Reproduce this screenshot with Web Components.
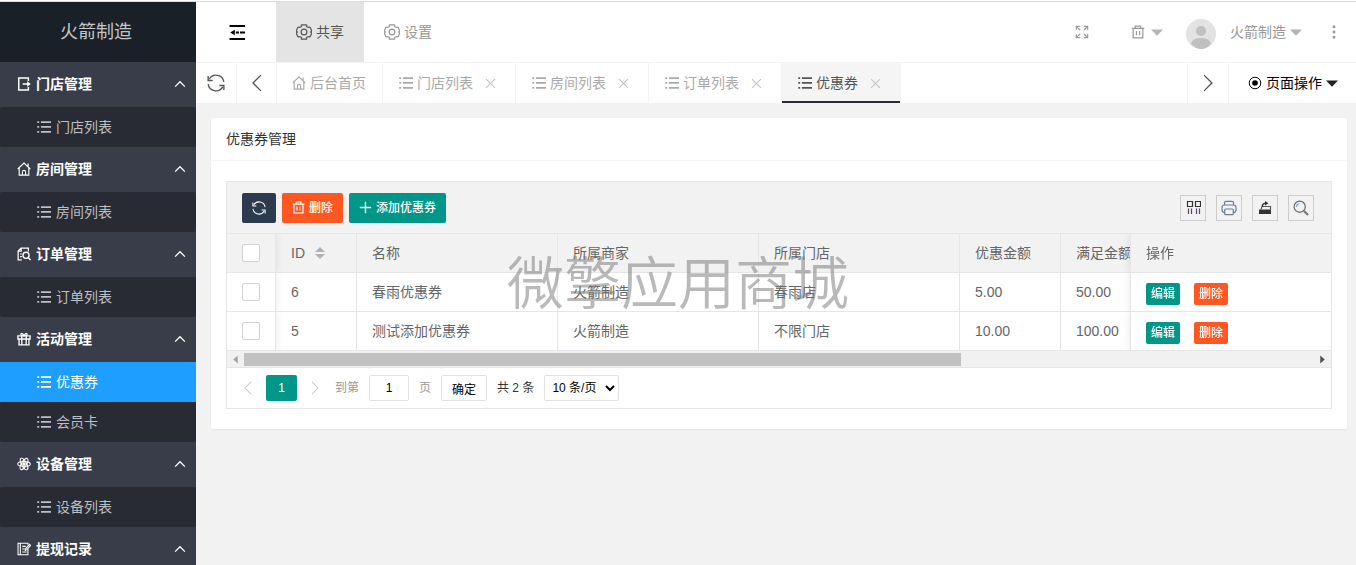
<!DOCTYPE html>
<html lang="zh-CN">
<head>
<meta charset="utf-8">
<title>优惠券管理</title>
<style>
  body { margin: 0; font: 14px/20px "Liberation Sans", "Noto Sans CJK SC", sans-serif; color: #666; background: #f2f2f2; }
</style>
</head>
<body>
<app-shell>
  <side-nav slot="side" brand="火箭制造">
    <nav-group icon="exit" label="门店管理"><nav-item>门店列表</nav-item></nav-group>
    <nav-group icon="home" label="房间管理"><nav-item>房间列表</nav-item></nav-group>
    <nav-group icon="order" label="订单管理"><nav-item>订单列表</nav-item></nav-group>
    <nav-group icon="gift" label="活动管理"><nav-item active>优惠券</nav-item><nav-item>会员卡</nav-item></nav-group>
    <nav-group icon="atom" label="设备管理"><nav-item>设备列表</nav-item></nav-group>
    <nav-group icon="note" label="提现记录"></nav-group>
  </side-nav>
  <top-bar slot="top">
    <top-link icon="gear" active>共享</top-link>
    <top-link icon="gear">设置</top-link>
    <span slot="user">火箭制造</span>
  </top-bar>
  <tab-strip slot="tabs">
    <page-tab icon="home">后台首页</page-tab>
    <page-tab icon="list" closable>门店列表</page-tab>
    <page-tab icon="list" closable>房间列表</page-tab>
    <page-tab icon="list" closable>订单列表</page-tab>
    <page-tab icon="list" closable active>优惠券</page-tab>
    <span slot="menu">页面操作</span>
  </tab-strip>
  <page-card>
    <span slot="title">优惠券管理</span>
    <table-frame>
      <table-toolbar slot="toolbar"></table-toolbar>
      <coupon-table></coupon-table>
      <table-pager slot="pager"></table-pager>
    </table-frame>
  </page-card>
  <span slot="mark">微擎应用商城</span>
</app-shell>

<script>
const RESET = `
  *, *::before, *::after { box-sizing: border-box; }
  button, input, select { font-family: inherit; margin: 0; }
  button { border: 0; padding: 0; background: none; color: inherit; cursor: pointer; }
  a { color: inherit; text-decoration: none; }
`;

function define(name, css, html) {
  customElements.define(name, class extends HTMLElement {
    constructor() {
      super();
      this.attachShadow({ mode: "open" });
    }
    connectedCallback() {
      if (this.shadowRoot.firstChild) return;
      this.shadowRoot.innerHTML = `<style>${RESET}${css}</style>` + (typeof html === "function" ? html(this) : html);
    }
  });
}

const ICONS = {
  list: `<path d="M4.500 2.400H16M4.500 7.900H16M4.500 13.500H16" stroke-width="2"/><path d="M.3 2.400H2.500M.3 7.900H2.500M.3 13.500H2.500" stroke-width="2"/>`,
  exit: `<path d="M13 4.500V1.200H2V14.800H13V11.500M6.500 8H14" stroke-width="1.700"/><path d="M11.500 4.800L15.800 8L11.500 11.200Z" fill="currentColor" stroke="none"/>`,
  home: `<path d="M.8 8L8 1.300L15.200 8M2.500 6.800V15H13.500V6.800M12.700 5V1.800M6.200 15V11.300Q6.200 9.500 8 9.500Q9.800 9.500 9.800 11.300V15" stroke-width="1.300"/>`,
  order: `<path d="M5.500 14.800H1.300V4.500L4.500 1.200H13V5.200M4.800 1.300V4.800H1.500M3.500 8H5.500M3.500 11H5.500" stroke-width="1.400"/><circle cx="10.300" cy="9.500" r="3.500" stroke-width="1.500"/><path d="M12.800 12L15.500 15" stroke-width="1.600"/>`,
  gift: `<path d="M1 4.500H15V8H1ZM2.300 8V14.800H13.700V8M5.500 4.500V14.800M10.500 4.500V14.800" stroke-width="1.500"/><path d="M8 4.300Q4 4.200 4.500 2.300Q5.500.3 8 4.300Q10.500.3 11.500 2.300Q12 4.200 8 4.300" stroke-width="1.400"/>`,
  atom: `<ellipse cx="8" cy="8" rx="7.200" ry="2.900"/><ellipse cx="8" cy="8" rx="7.200" ry="2.900" transform="rotate(60 8 8)"/><ellipse cx="8" cy="8" rx="7.200" ry="2.900" transform="rotate(120 8 8)"/><circle cx="8" cy="8" r="1.500" fill="currentColor"/>`,
  note: `<path d="M12.500 8V14.500H1.200V1.500H12.500V3M3.800 1.500V14.500M6 5H10M6 8H9M6 11.500H11"/><path d="M9.500 9.500L10 7.500L14.300 2.700L15.600 3.900L11.300 8.700Z"/>`,
  gear: `<path d="M5.600 2Q4.600.6 6.200.8H9.800Q11.400.6 10.400 2Q11 3.600 13.200 3.200Q14.200 3 14.600 4.300L15.500 6.400Q15.700 7.400 14.500 8Q15.700 8.600 15.500 9.600L14.600 11.700Q14.200 13 13.200 12.800Q11 12.400 10.400 14Q11.400 15.400 9.800 15.200H6.200Q4.600 15.400 5.600 14Q5 12.400 2.800 12.800Q1.800 13 1.400 11.700L.5 9.600Q.3 8.600 1.500 8Q.3 7.400.5 6.400L1.400 4.300Q1.800 3 2.800 3.200Q5 3.600 5.600 2Z" stroke-width="1.200" stroke-linejoin="round"/><circle cx="8" cy="8" r="2.900" stroke-width="1.200"/>`,
  shrink: `<path d="M.5 2H16M6.800 8.500H10M11 8.500H16M.5 15H16" stroke-width="1.900"/><path d="M5.800 5.700V11.300L1.200 8.500Z" fill="currentColor" stroke="none"/>`,
  full: `<path d="M1.500 5.500V1.500H5.500M1.500 1.500L6 6M10.500 1.500H14.500V5.500M14.500 1.500L10 6M1.500 10.500V14.500H5.500M1.500 14.500L6 10M10.500 14.500H14.500V10.500M14.500 14.500L10 10" stroke-width="1.300"/>`,
  trash: `<path d="M.8 3.800H15.200M5 3.800V1.200H11V3.800M2.500 3.800V14.700H13.500V3.800M6.200 6.800V11.800M9.800 6.800V11.800" stroke-width="1.400"/>`,
  refresh: `<path d="M15 7A7 7 0 0 0 2 4.600M1 9A7 7 0 0 0 14 11.400"/><path d="M1 1.800V5.800H5M15 14.200V10.200H11"/>`,
  left: `<path d="M11.500 1L4.500 8L11.500 15"/>`,
  right: `<path d="M4.500 1L11.500 8L4.500 15"/>`,
  up: `<path d="M1.500 11.500L8 5L14.500 11.500" stroke-width="1.700"/>`,
  close: `<path d="M1.500 1.500L14.500 14.500M14.500 1.500L1.500 14.500" stroke-width="1.500"/>`,
  plus: `<path d="M8 1V15M1 8H15" stroke-width="1.600"/>`,
  caret: `<path d="M0 4.500H16L8 13Z" fill="currentColor" stroke="none"/>`,
  radio: `<circle cx="8" cy="8" r="6.600" stroke-width="1.100"/><circle cx="8" cy="8" r="3.200" fill="currentColor" stroke="none"/>`,
  more: `<g fill="currentColor" stroke="none"><rect x="6.700" y="1.500" width="2.600" height="2.600"/><rect x="6.700" y="6.700" width="2.600" height="2.600"/><rect x="6.700" y="11.900" width="2.600" height="2.600"/></g>`,
  avatar: `<circle cx="8" cy="8" r="8" fill="#e2e2e2" stroke="none"/><circle cx="8" cy="6.400" r="2.700" fill="#c0c0c0" stroke="none"/><path d="M2.700 13.200Q3.300 10.100 8 10.100Q12.700 10.100 13.300 13.200Q11 16 8 16Q5 16 2.700 13.200Z" fill="#c0c0c0" stroke="none"/>`,
  sort: `<g fill="#b2b2b2" stroke="none"><path d="M8 2L13 7H3Z"/><path d="M8 14L13 9H3Z"/></g>`,
  columns: `<path d="M2.500 1.500H7.500V6.500H2.500ZM10.500 1.500H15.500V6.500H10.500Z" stroke="#333"/><path d="M3.500 8.500V14M6.500 8.500V14M11.500 8.500V14M14.500 8.500V14" stroke="#6b3a78"/>`,
  print: `<g stroke="#6b7f93"><rect x="1" y="5" width="14" height="7.500" rx="2.500"/><path d="M3.500 5V2.500Q3.500 1.300 5 1.300H11Q12.500 1.300 12.500 2.500V5"/><rect x="3.700" y="9" width="8.600" height="5.700" rx="1" fill="#f2f2f2"/></g>`,
  upload: `<path d="M2 9.500H14V14H2Z" fill="#333" stroke="none"/><path d="M4 9.500L5 6.500H13.500V9.500" stroke="#555"/><path d="M5.500 7V5Q6 3.500 8.500 3.300" stroke="#333" stroke-width="1.400"/><path d="M8 1L11.500 3.300L8 5.600Z" fill="#333" stroke="none"/>`,
  search: `<circle cx="6.700" cy="6.700" r="5.600" stroke="#666"/><path d="M3.500 7Q3.500 4 6.500 3.500" stroke="#8ba0b8"/><path d="M11 11L15 15" stroke="#777" stroke-width="2.200"/>`,
  arrowL: `<path d="M12 1V15L4 8Z" fill="currentColor" stroke="none"/>`,
  arrowR: `<path d="M4 1V15L12 8Z" fill="currentColor" stroke="none"/>`
};

define("ui-icon", `
  :host { display: inline-block; flex: none; width: var(--icon, 14px); height: var(--icon, 14px); }
  svg { display: block; width: 100%; height: 100%; fill: none; stroke: currentColor; stroke-width: 1.200; }
`, el => `<svg viewBox="0 0 16 16" aria-hidden="true">${ICONS[el.getAttribute("name")]}</svg>`);

define("app-shell", `
  :host { display: flex; flex-direction: column; height: 100vh; overflow: hidden; position: relative; }
  .edge { flex: none; height: 2px; background: #fff; border-bottom: 1px solid #dadddd; }
  .body { flex: 1; min-height: 0; display: grid; grid-template-columns: 196px minmax(0, 1fr); }
  .side { min-height: 0; overflow: hidden; background: #282b33; }
  .main { min-width: 0; }
  main { padding: 15px 9px 15px 15px; }
  .mark { position: absolute; inset: 0; display: grid; place-items: center; padding-top: 4px; pointer-events: none;
    font-size: 57px; line-height: 57px; font-weight: 350; color: rgba(120, 120, 120, .52); }
`, `<div class="edge"></div>
  <div class="body">
    <div class="side"><slot name="side"></slot></div>
    <div class="main"><slot name="top"></slot><slot name="tabs"></slot><main><slot></slot></main></div>
  </div>
  <div class="mark"><slot name="mark"></slot></div>`);

define("side-nav", `
  :host { display: block; }
  .brand { display: block; padding-right: 4px; background: #1a2027; color: #c4c6c8; text-align: center; font-size: 18px; line-height: 60px; }
`, el => `<a class="brand" href="#">${el.getAttribute("brand")}</a><nav><slot></slot></nav>`);

define("nav-group", `
  :host { display: block; }
  .head { display: flex; align-items: center; gap: 5px; width: 100%; height: 45px; padding: 0 10px 2px 17px;
    background: #393d49; color: #fff; font-size: 14px; line-height: 20px; font-weight: 700; text-align: left; }
  .text { flex: 1; }
  .chev { --icon: 12px; }
`, el => `<button class="head" aria-expanded="true"><ui-icon name="${el.getAttribute("icon")}"></ui-icon><span class="text">${el.getAttribute("label")}</span><ui-icon class="chev" name="up"></ui-icon></button><slot></slot>`);

define("nav-item", `
  :host { display: block; background: #393d49; }
  a { display: flex; align-items: center; gap: 5px; height: 40px; padding-left: 37px; color: #bdbfc2; background: #282b33; border-radius: 2px; }
  :host([active]) a { background: #1e9fff; color: #fff; border-radius: 0; }
`, `<a href="#"><ui-icon name="list"></ui-icon><slot></slot></a>`);

define("top-bar", `
  :host { display: flex; height: 60px; background: #fff; color: #999; }
  .fold { display: grid; place-items: center; width: 80px; padding-left: 2px; color: #000; --icon: 16px; }
  nav { display: flex; flex: 1; }
  .tools { display: flex; align-items: center; padding-right: 14px; }
  .tools button { display: flex; align-items: center; height: 60px; font-size: 14px; line-height: 20px; }
  .full { margin-right: 42px; }
  .trash { gap: 6px; margin-right: 23px; }
  .user { gap: 14px; margin-right: 24px; }
  .name { display: flex; align-items: center; gap: 4px; }
  .caret { --icon: 12px; color: #b5b5b5; }
  .face { --icon: 30px; margin-top: 4px; }
  .more { --icon: 16px; }
`, `<button class="fold" aria-label="收起菜单"><ui-icon name="shrink"></ui-icon></button>
  <nav><slot></slot></nav>
  <div class="tools">
    <button class="full" aria-label="全屏"><ui-icon name="full"></ui-icon></button>
    <button class="trash" aria-label="清理"><ui-icon name="trash"></ui-icon><ui-icon class="caret" name="caret"></ui-icon></button>
    <button class="user"><ui-icon class="face" name="avatar"></ui-icon><span class="name"><slot name="user"></slot><ui-icon class="caret" name="caret"></ui-icon></span></button>
    <button class="more" aria-label="更多"><ui-icon name="more"></ui-icon></button>
  </div>`);

define("top-link", `
  :host { display: block; }
  a { display: flex; align-items: center; gap: 4px; height: 60px; padding: 0 20px; color: #999; --icon: 16px; }
  :host([active]) a { background: #e4e4e4; color: #555; }
`, el => `<a href="#"><ui-icon name="${el.getAttribute("icon")}"></ui-icon><slot></slot></a>`);

define("tab-strip", `
  :host { box-sizing: border-box; display: flex; height: 41px; background: #fff; border-top: 1px solid #f4f4f4; color: #555; }
  button { display: flex; align-items: center; justify-content: center; }
  .step { flex: none; width: 41px; border-right: 1px solid #f4f4f4; --icon: 18px; }
  .step + .step { width: 40px; }
  .tabs { display: flex; flex: 1; min-width: 0; overflow: hidden; }
  .tabs ~ .next { width: 42px; border-left: 1px solid #f4f4f4; }
  .menu { gap: 4px; padding: 0 18px 0 19px; color: #000; font-size: 14px; line-height: 20px; }
  .menu .caret { --icon: 12px; color: #222; }
`, `<button class="step" aria-label="刷新"><ui-icon name="refresh"></ui-icon></button>
  <button class="step" aria-label="向左"><ui-icon name="left"></ui-icon></button>
  <div class="tabs"><slot></slot></div>
  <button class="step next" aria-label="向右"><ui-icon name="right"></ui-icon></button>
  <button class="menu"><ui-icon name="radio"></ui-icon><slot name="menu"></slot><ui-icon class="caret" name="caret"></ui-icon></button>`);

define("page-tab", `
  :host { box-sizing: border-box; display: flex; align-items: center; gap: 8px; height: 40px; padding: 0 16px 0 15px; border-right: 1px solid #f4f4f4; color: #aaa; }
  :host([closable]) { padding-left: 16px; }
  :host([active]) { background: #f5f5f5; color: #555; box-shadow: inset 0 -2px #292b34; }
  a { display: flex; align-items: center; gap: 4px; }
  button { display: grid; place-items: center; width: 18px; height: 16px; color: #c2c2c2; --icon: 11px; }
`, el => `<a href="#"><ui-icon name="${el.getAttribute("icon")}"></ui-icon><slot></slot></a>` +
  (el.hasAttribute("closable") ? `<button aria-label="关闭"><ui-icon name="close"></ui-icon></button>` : ""));

define("page-card", `
  :host { display: block; background: #fff; border-radius: 2px; box-shadow: 0 1px 2px rgba(0, 0, 0, .05); }
  h1 { margin: 0; padding: 0 15px; height: 43px; line-height: 42px; font-size: 14px; font-weight: 400; color: #333; border-bottom: 1px solid #f6f6f6; }
  .body { padding: 20px 15px; }
`, `<h1><slot name="title"></slot></h1><div class="body"><slot></slot></div>`);

define("table-frame", `
  :host { display: block; border: 1px solid #e6e6e6; }
  .bar { display: flex; height: 17px; background: #f1f1f1; border-bottom: 1px solid #e6e6e6; color: #505050; --icon: 9px; }
  .end { display: grid; place-items: center; width: 17px; }
  .end.off { color: #a3a3a3; }
  .track { flex: 1; padding: 2px 0 1px; }
  .thumb { width: 67%; height: 100%; background: #c1c1c1; }
`, `<slot name="toolbar"></slot><slot></slot>
  <div class="bar"><span class="end off"><ui-icon name="arrowL"></ui-icon></span><div class="track"><div class="thumb"></div></div><span class="end"><ui-icon name="arrowR"></ui-icon></span></div>
  <slot name="pager"></slot>`);

define("table-toolbar", `
  :host { box-sizing: border-box; display: flex; justify-content: space-between; align-items: center; height: 52px; padding: 0 17px 0 15px;
    background: #f2f2f2; border-bottom: 1px solid #e6e6e6; }
  div { display: flex; gap: 6px; }
  .act { display: flex; align-items: center; gap: 4px; height: 30px; padding: 0 10px; border-radius: 2px; color: #fff; background: #009688;
    font-size: 12px; line-height: 18px; font-weight: 500; --icon: 13px; }
  .dark { background: #2c3b4e; --icon: 14px; }
  .red { background: #ff5722; }
  .tools { gap: 10px; --icon: 16px; }
  .tools button { display: grid; place-items: center; width: 26px; height: 26px; border: 1px solid #ccc; }
`, `<div>
    <button class="act dark" aria-label="刷新"><ui-icon name="refresh"></ui-icon></button>
    <button class="act red"><ui-icon name="trash"></ui-icon>删除</button>
    <button class="act"><ui-icon name="plus"></ui-icon>添加优惠券</button>
  </div>
  <div class="tools">
    <button aria-label="筛选列"><ui-icon name="columns"></ui-icon></button>
    <button aria-label="打印"><ui-icon name="print"></ui-icon></button>
    <button aria-label="导出"><ui-icon name="upload"></ui-icon></button>
    <button aria-label="搜索"><ui-icon name="search"></ui-icon></button>
  </div>`);

const ROWS = [
  ["6", "春雨优惠券", "火箭制造", "春雨店", "5.00", "50.00"],
  ["5", "测试添加优惠券", "火箭制造", "不限门店", "10.00", "100.00"]
];

define("coupon-table", `
  :host { display: block; overflow: hidden; }
  table { width: 100%; min-width: 1137px; table-layout: fixed; border-collapse: separate; border-spacing: 0; }
  th, td { height: 39px; padding: 0 15px; border: solid #e6e6e6; border-width: 0 1px 1px 0; background: #fff;
    font-size: 14px; line-height: 20px; font-weight: 400; text-align: left; white-space: nowrap; }
  th { background: #f2f2f2; }
  .c49 { width: 49px; } .c81 { width: 81px; } .c201 { width: 201px; } .c101 { width: 101px; }
  .pick { position: sticky; left: 0; z-index: 1; box-shadow: 1px 0 8px rgba(0, 0, 0, .08); clip-path: inset(0 -12px 0 0); }
  .ops { position: sticky; right: 0; z-index: 1; border-left-width: 1px; border-right-width: 0; box-shadow: -1px 0 8px rgba(0, 0, 0, .08); clip-path: inset(0 0 0 -12px); }
  .sort { display: flex; align-items: center; gap: 7px; --icon: 16px; }
  input { display: block; appearance: none; width: 18px; height: 18px; border: 1px solid #d2d2d2; border-radius: 2px; background: #fff; }
  .row { display: flex; gap: 14px; padding-top: 4px; }
  .row button { height: 22px; padding: 0 5px; border-radius: 2px; background: #009688; color: #fff; font-size: 12px; line-height: 22px; font-weight: 500; }
  .row .del { background: #ff5722; }
`, `<table>
    <colgroup><col class="c49"><col class="c81"><col class="c201"><col class="c201"><col class="c201"><col class="c101"><col><col class="c201"></colgroup>
    <thead><tr><th class="pick"><input type="checkbox" aria-label="全选"></th><th><span class="sort">ID<ui-icon name="sort"></ui-icon></span></th>
    <th>名称</th><th>所属商家</th><th>所属门店</th><th>优惠金额</th><th>满足金额</th><th class="ops">操作</th></tr></thead>
    <tbody>${ROWS.map(r => `<tr><td class="pick"><input type="checkbox" aria-label="选择 ${r[0]}"></td>${r.map(c => `<td>${c}</td>`).join("")}
      <td class="ops"><div class="row"><button>编辑</button><button class="del">删除</button></div></td></tr>`).join("")}</tbody>
  </table>`);

define("table-pager", `
  :host { box-sizing: border-box; display: flex; align-items: center; gap: 10px; height: 40px; padding-left: 11px; font-size: 12px; line-height: 18px; color: #333; }
  .pages { display: flex; align-items: center; gap: 8px; color: #c8c8c8; }
  .pages button { display: grid; place-items: center; width: 20px; height: 26px; }
  .pages .now { width: 31px; border-radius: 2px; background: #009688; color: #fff; font-size: 12px; }
  label { display: flex; align-items: center; gap: 10px; color: #999; }
  input, select, .go { height: 26px; border: 1px solid #e2e2e2; border-radius: 2px; background: #fff; color: #000; font-size: 12px; }
  input { width: 40px; padding: 0; text-align: center; }
  .go { width: 46px; }
  select { width: 75px; padding: 0 3px; }
`, `<div class="pages"><button aria-label="上一页"><ui-icon name="left"></ui-icon></button><button class="now">1</button><button aria-label="下一页"><ui-icon name="right"></ui-icon></button></div>
  <label>到第<input type="text" value="1">页</label>
  <button class="go">确定</button>
  <span>共 2 条</span>
  <select aria-label="每页条数"><option>10 条/页</option></select>`);
</script>
</body>
</html>
